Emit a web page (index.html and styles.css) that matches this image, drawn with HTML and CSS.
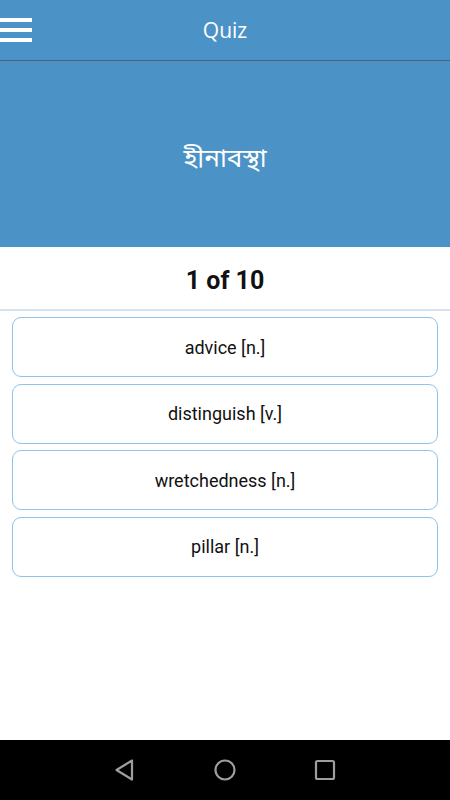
FILE: index.html
```html
<!DOCTYPE html>
<html>
<head>
<meta charset="utf-8">
<link rel="stylesheet" href="styles.css">
</head>
<body>
<div class="app">
  <header class="toolbar">
    <div class="menu"><span></span><span></span><span></span></div>
    <div class="title">Quiz</div>
  </header>
  <section class="word">
    <div class="word-text">হীনাবস্থা</div>
  </section>
  <div class="counter">1 of 10</div>
  <div class="options">
    <div class="option">advice [n.]</div>
    <div class="option">distinguish [v.]</div>
    <div class="option">wretchedness [n.]</div>
    <div class="option">pillar [n.]</div>
  </div>
  <div class="spacer"></div>
  <nav class="navbar">
    <svg width="24" height="24" viewBox="0 0 24 24"><path d="M19 2.5 L3.5 12 L19 21.5 Z" fill="none" stroke="#9e9e9e" stroke-width="2.2" stroke-linejoin="round"/></svg>
    <svg width="24" height="24" viewBox="0 0 24 24"><circle cx="12" cy="12" r="9.5" fill="none" stroke="#9e9e9e" stroke-width="2.2"/></svg>
    <svg width="24" height="24" viewBox="0 0 24 24"><rect x="3" y="3" width="18" height="18" rx="1.5" fill="none" stroke="#9e9e9e" stroke-width="2.2"/></svg>
  </nav>
</div>
</body>
</html>
```
FILE: styles.css
```css
* { box-sizing: border-box; }
html, body { margin: 0; padding: 0; }
body { width: 450px; height: 800px; background: #fff; font-family: Roboto, "Noto Sans", sans-serif; overflow: hidden; }
.app { display: flex; flex-direction: column; height: 800px; }
.toolbar {
  height: 61px; background: #4b93c7; border-bottom: 1px solid #4d6378;
  display: flex; align-items: center; justify-content: center; position: relative;
}
.menu { position: absolute; left: 0; top: 18px; width: 32px; display: flex; flex-direction: column; gap: 6px; }
.menu span { display: block; height: 4px; background: #fff; }
.title { color: #fff; font-family: "Open Sans", "Noto Sans", sans-serif; font-size: 21px; }
.word {
  height: 186px; background: #4b93c7;
  display: flex; align-items: center; justify-content: center;
}
.word-text { color: #fff; font-size: 26px; font-family: "Noto Sans Bengali", "Noto Sans", sans-serif; margin-top: 12px; }
.counter {
  height: 64px; display: flex; align-items: center; justify-content: center;
  font-size: 25px; font-weight: bold; color: #111;
  border-bottom: 2px solid #d4e3ef; padding-top: 5px;
}
.options { padding: 6px 12px 0; display: flex; flex-direction: column; gap: 6.5px; }
.option {
  height: 60px; border: 1px solid #8fc3ea; border-radius: 9px;
  display: flex; align-items: center; justify-content: center;
  font-size: 18px; color: #111;
}
.spacer { flex: 1; }
.navbar {
  height: 60px; background: #000;
  display: flex; align-items: center; justify-content: center; gap: 76px;
}
```
